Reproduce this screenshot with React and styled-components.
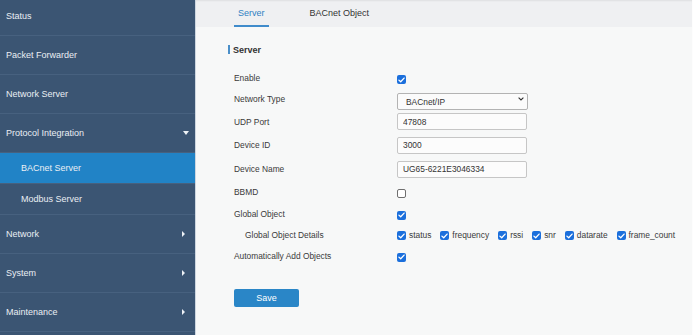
import React from 'react';
import styled, { createGlobalStyle } from 'styled-components';

const GlobalStyle = createGlobalStyle`
  html, body { margin: 0; padding: 0; height: 100%; overflow: hidden; }
  body { font-family: "Liberation Sans", Arial, sans-serif; background: #f7f8f8; }
  * { box-sizing: border-box; }
`;

const Page = styled.div`
  display: flex;
  width: 693px;
  height: 335px;
  overflow: hidden;
`;

const Sidebar = styled.nav`
  width: 196px;
  flex: none;
  background: #3b5573;
  border-right: 1px solid #cdd6e0;
  overflow: hidden;
`;

const MenuList = styled.ul`
  list-style: none;
  margin: -3px 0 0;
  padding: 0;
`;

const MenuItem = styled.li`
  display: flex;
  align-items: center;
  justify-content: space-between;
  height: ${p => (p.$sub ? 31 : 39)}px;
  padding: 0 ${p => p.$pr || 6}px 0 ${p => (p.$sub ? 21 : 6)}px;
  border-bottom: 1px solid #47617f;
  background: ${p => (p.$active ? '#2183c6' : 'transparent')};
  color: #eaeff4;
  font-size: 9px;
  white-space: nowrap;
`;

const Caret = styled.span`
  width: 0;
  height: 0;
  ${p =>
    p.$dir === 'down'
      ? `border-left: 3.5px solid transparent;
         border-right: 3.5px solid transparent;
         border-top: 4px solid #eef2f6;`
      : `border-top: 3.5px solid transparent;
         border-bottom: 3.5px solid transparent;
         border-left: 3.5px solid #eef2f6;
         margin-right: 4px;`}
`;

const Main = styled.main`
  flex: 1;
  min-width: 0;
  background: #f7f8f8;
  display: flex;
  flex-direction: column;
  border-right: 1px solid #fdfdfd;
`;

const TabBar = styled.div`
  height: 27px;
  flex: none;
  background: #eff0f2;
  display: flex;
  gap: 37px;
  padding-left: 38px;
  box-shadow: inset 0 2px 2px -1px rgba(0, 0, 0, 0.07);
`;

const Tab = styled.div`
  height: 27px;
  padding: 1px 4px 0;
  display: flex;
  align-items: center;
  font-size: 9px;
  color: ${p => (p.$active ? '#2f80c2' : '#333')};
  border-bottom: 2px solid ${p => (p.$active ? '#3f8bcb' : 'transparent')};
`;

const Content = styled.div`
  padding: 18px 0 0 32px;
`;

const SectionTitle = styled.h2`
  margin: 0;
  height: 9px;
  display: flex;
  align-items: center;
  border-left: 2px solid #4a8fc9;
  padding-left: 3px;
  font-size: 9px;
  font-weight: bold;
  color: #333;
`;

const Form = styled.div`
  margin: 14px 0 0 6px;
`;

const Row = styled.div`
  display: grid;
  grid-template-columns: 163px auto;
  align-items: center;
  height: ${p => p.$h}px;
`;

const Label = styled.label`
  font-size: 8.4px;
  color: #3a3a3a;
  padding-left: ${p => (p.$indent ? 11 : 0)}px;
  white-space: nowrap;
`;

const TextInput = styled.input`
  width: 130px;
  height: 17px;
  border: 1px solid #c6c6c6;
  border-radius: 2px;
  background: #fcfcfc;
  padding: 0 5px;
  font-family: inherit;
  font-size: 8.4px;
  color: #333;
  outline: none;
`;

const SelectWrap = styled.div`
  position: relative;
  width: 131px;
  height: 17px;
`;

const Select = styled.select`
  appearance: none;
  width: 100%;
  height: 100%;
  border: 1px solid #b3b3b3;
  border-radius: 2px;
  background: #fbfbfb;
  padding: 0 0 0 8px;
  font-family: inherit;
  font-size: 8.4px;
  color: #333;
  outline: none;
`;

const Chevron = styled.svg`
  position: absolute;
  right: 4px;
  top: 6px;
  width: 6px;
  height: 4px;
  pointer-events: none;
`;

const Box = styled.span`
  display: inline-flex;
  align-items: center;
  justify-content: center;
  flex: none;
  width: 9px;
  height: 9px;
  margin-top: ${p => p.$mt ?? 3}px;
  border-radius: 2px;
  background: ${p => (p.$checked ? '#1b6fdc' : '#fff')};
  border: ${p => (p.$checked ? 'none' : '1px solid #6f6f6f')};
`;

const CheckGroup = styled.div`
  display: flex;
  align-items: center;
  gap: 9px;
`;

const CheckItem = styled.span`
  display: inline-flex;
  align-items: center;
  gap: 3px;
  font-size: 8.4px;
  color: #3a3a3a;
`;

const SaveButton = styled.button`
  margin-top: 23px;
  width: 65px;
  height: 18px;
  border: none;
  border-radius: 2px;
  background: #2a86c7;
  color: #fff;
  font-family: inherit;
  font-size: 9px;
  padding: 0;
`;

const Checkbox = ({ checked, mt }) => (
  <Box $checked={checked} $mt={mt}>
    {checked && (
      <svg width="7" height="6" viewBox="0 0 7 6">
        <path d="M0.9 3.1 L2.7 4.8 L6.1 1.1" fill="none" stroke="#fff" strokeWidth="1.3" strokeLinecap="round" strokeLinejoin="round" />
      </svg>
    )}
  </Box>
);

const menu = [
  { label: 'Status' },
  { label: 'Packet Forwarder' },
  { label: 'Network Server' },
  { label: 'Protocol Integration', caret: 'down' },
  { label: 'BACnet Server', sub: true, active: true },
  { label: 'Modbus Server', sub: true },
  { label: 'Network', caret: 'right' },
  { label: 'System', caret: 'right' },
  { label: 'Maintenance', caret: 'right' },
];

const details = ['status', 'frequency', 'rssi', 'snr', 'datarate', 'frame_count'];

export default function App() {
  return (
    <>
      <GlobalStyle />
      <Page>
        <Sidebar>
          <MenuList>
            {menu.map(m => (
              <MenuItem key={m.label} $sub={m.sub} $active={m.active}>
                <span>{m.label}</span>
                {m.caret && <Caret $dir={m.caret} />}
              </MenuItem>
            ))}
          </MenuList>
        </Sidebar>
        <Main>
          <TabBar>
            <Tab $active>Server</Tab>
            <Tab>BACnet Object</Tab>
          </TabBar>
          <Content>
            <SectionTitle>Server</SectionTitle>
            <Form>
              <Row $h={20}>
                <Label>Enable</Label>
                <Checkbox checked />
              </Row>
              <Row $h={22}>
                <Label>Network Type</Label>
                <SelectWrap>
                  <Select defaultValue="ip">
                    <option value="ip">BACnet/IP</option>
                  </Select>
                  <Chevron viewBox="0 0 6 4">
                    <path d="M0.6 0.6 L3 3 L5.4 0.6" fill="none" stroke="#333" strokeWidth="1.1" />
                  </Chevron>
                </SelectWrap>
              </Row>
              <Row $h={23}>
                <Label>UDP Port</Label>
                <TextInput defaultValue="47808" />
              </Row>
              <Row $h={24}>
                <Label>Device ID</Label>
                <TextInput defaultValue="3000" />
              </Row>
              <Row $h={24}>
                <Label>Device Name</Label>
                <TextInput defaultValue="UG65-6221E3046334" />
              </Row>
              <Row $h={22}>
                <Label>BBMD</Label>
                <Checkbox />
              </Row>
              <Row $h={21}>
                <Label>Global Object</Label>
                <Checkbox checked />
              </Row>
              <Row $h={21}>
                <Label $indent>Global Object Details</Label>
                <CheckGroup>
                  {details.map(d => (
                    <CheckItem key={d}>
                      <Checkbox checked mt={2} />
                      {d}
                    </CheckItem>
                  ))}
                </CheckGroup>
              </Row>
              <Row $h={21}>
                <Label>Automatically Add Objects</Label>
                <Checkbox checked />
              </Row>
              <SaveButton>Save</SaveButton>
            </Form>
          </Content>
        </Main>
      </Page>
    </>
  );
}
